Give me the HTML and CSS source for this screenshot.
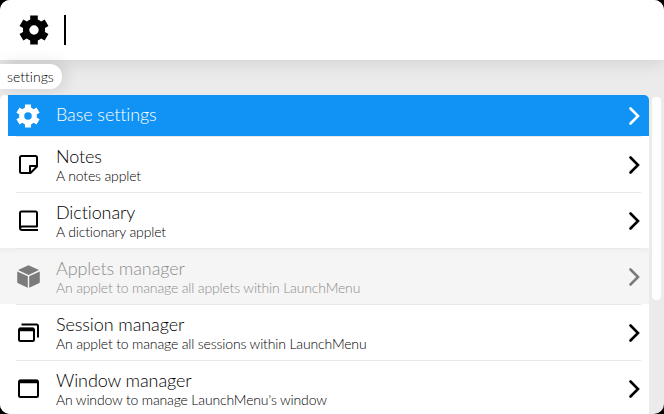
FILE: index.html
```html
<!DOCTYPE html>
<html lang="en">
<head>
<meta charset="utf-8">
<title>LaunchMenu</title>
<link rel="stylesheet" href="styles.css">
</head>
<body>
<svg class="defs" aria-hidden="true">
  <symbol id="gear" viewBox="0 0 30 30">
    <g fill="none" stroke="currentColor">
      <circle cx="15" cy="15" r="7.900" stroke-width="6.400"/>
      <path stroke-width="7.600" d="M15 .5v6M15 23.500v6M2.440 7.750l5.200 3M22.360 19.250l5.200 3M27.560 7.750l-5.200 3M7.640 19.250l-5.200 3"/>
    </g>
  </symbol>
  <symbol id="chevron" viewBox="0 0 12 20"><path d="M2.500 2.500l7.500 7.500-7.500 7.500" fill="none" stroke="currentColor" stroke-width="2.6" stroke-linecap="round"/></symbol>
</svg>
<main class="window">
  <header class="search">
    <svg class="search-icon"><use href="#gear"/></svg>
    <span class="caret"></span>
  </header>
  <div class="path"><span class="crumb">settings</span></div>
  <section class="content">
    <div class="menu">
      <div class="item selected">
        <svg class="icon" viewBox="0 0 24 24"><use href="#gear" width="24" height="24"/></svg>
        <div class="text"><div class="name">Base settings</div></div>
        <svg class="chevron"><use href="#chevron"/></svg>
      </div>
      <div class="item">
        <svg class="icon line" viewBox="0 0 24 24"><path d="M5.500 4h14Q21 4 21 5.500V14.500l-6.500 6.500H5.500Q4 21 4 19.500V5.500Q4 4 5.500 4zM14 20.500v-6.500H21"/></svg>
        <div class="text"><div class="name">Notes</div><div class="description">A notes applet</div></div>
        <svg class="chevron"><use href="#chevron"/></svg>
      </div>
      <div class="item">
        <svg class="icon line" viewBox="0 0 24 24"><path d="M22 22H6Q4 22 4 20V5Q4 3.500 5.500 3.500h14q1.500 0 1.500 1.500V18.500H6Q4 18.500 4 20.500"/></svg>
        <div class="text"><div class="name">Dictionary</div><div class="description">A dictionary applet</div></div>
        <svg class="chevron"><use href="#chevron"/></svg>
      </div>
      <div class="item disabled">
        <svg class="icon" viewBox="0 0 24 24"><path d="M12.500 1.300L23 6 12.500 10.900 2 6zM1.200 7.400L11.800 12.200v11.500L2.100 19.300Q1.200 18.900 1.200 17.900zM23.800 7.400L13.200 12.200v11.500l9.700-4.400q.9-.4.9-1.400z"/></svg>
        <div class="text"><div class="name">Applets manager</div><div class="description">An applet to manage all applets within LaunchMenu</div></div>
        <svg class="chevron"><use href="#chevron"/></svg>
      </div>
      <div class="item">
        <svg class="icon line" viewBox="0 0 24 24"><rect x="3" y="8.500" width="15" height="12.500" rx="1.500"/><path d="M3 9.500h15" class="bar"/><path d="M5.500 4.500H20.500Q22 4.500 22 6V17.500"/></svg>
        <div class="text"><div class="name">Session manager</div><div class="description">An applet to manage all sessions within LaunchMenu</div></div>
        <svg class="chevron"><use href="#chevron"/></svg>
      </div>
      <div class="item">
        <svg class="icon line" viewBox="0 0 24 24"><rect x="3" y="4.500" width="19" height="16.500" rx="1.500"/><path d="M3 5.500h19" class="bar"/></svg>
        <div class="text"><div class="name">Window manager</div><div class="description">An window to manage LaunchMenu's window</div></div>
        <svg class="chevron"><use href="#chevron"/></svg>
      </div>
    </div>
    <div class="scrollbar"></div>
  </section>
</main>
</body>
</html>
```

FILE: styles.css
```css
* { box-sizing: border-box; }
body { margin: 0; background: #000; font-family: Lato, sans-serif; font-weight: 300; color: #000; }
.defs { position: absolute; width: 0; height: 0; }
.window { height: 414px; overflow: hidden; border-radius: 10px; background: #ebebeb; display: flex; flex-direction: column; }
.search { flex: none; height: 60px; padding: 0 19px; display: flex; align-items: center; gap: 15px; background: #fff; box-shadow: 0 0 20px rgba(0,0,0,.15); }
.search-icon { width: 30px; height: 30px; }
.caret { width: 2px; height: 30px; background: #000; }
.path { flex: none; height: 35px; padding-top: 4px; }
.crumb { display: block; width: 62px; height: 25px; padding-left: 7px; line-height: 26px; font-size: 14px; letter-spacing: .01px; background: #fff; border-radius: 0 12px 12px 0; box-shadow: 4px 0 16px rgba(0,0,0,.12); }
.content { flex: 1; min-height: 0; display: flex; gap: 3px; }
.menu { width: 649px; border-radius: 5px 5px 0 0; overflow: hidden; background: #fff; }
.item { position: relative; height: 56px; padding: 0 9px 0 16px; display: flex; align-items: center; }
.item + .item::before { content: ""; position: absolute; left: 16px; right: 8px; top: 0; height: 1px; background: #e8e8e8; }
.selected { height: 41px; margin-left: 8px; padding-left: 8px; background: #1093f4; color: #fff; }
.icon { flex: none; width: 24px; height: 24px; margin-right: 16px; fill: currentColor; }
.line { fill: none; stroke: currentColor; stroke-width: 2; stroke-linejoin: round; }
.bar { stroke-width: 3.5; }
.text { flex: 1; padding-top: 1px; }
.name { font-size: 18px; line-height: 21px; letter-spacing: -.1px; }
.selected .text { padding-bottom: 4px; }
.description { font-size: 14px; line-height: 17px; letter-spacing: -.16px; }
.chevron { flex: none; width: 12px; height: 20px; margin-top: 2px; }
.selected .chevron { margin-top: 1px; }
.disabled { background: #f5f5f5; color: #7b7b7b; box-shadow: inset 0 8px 8px -8px rgba(0,0,0,.06); }
.disabled .text { color: #8c8c8c; }
.scrollbar { width: 9px; height: 203px; margin-top: 2px; border-radius: 4px; background: #fff; }
```
